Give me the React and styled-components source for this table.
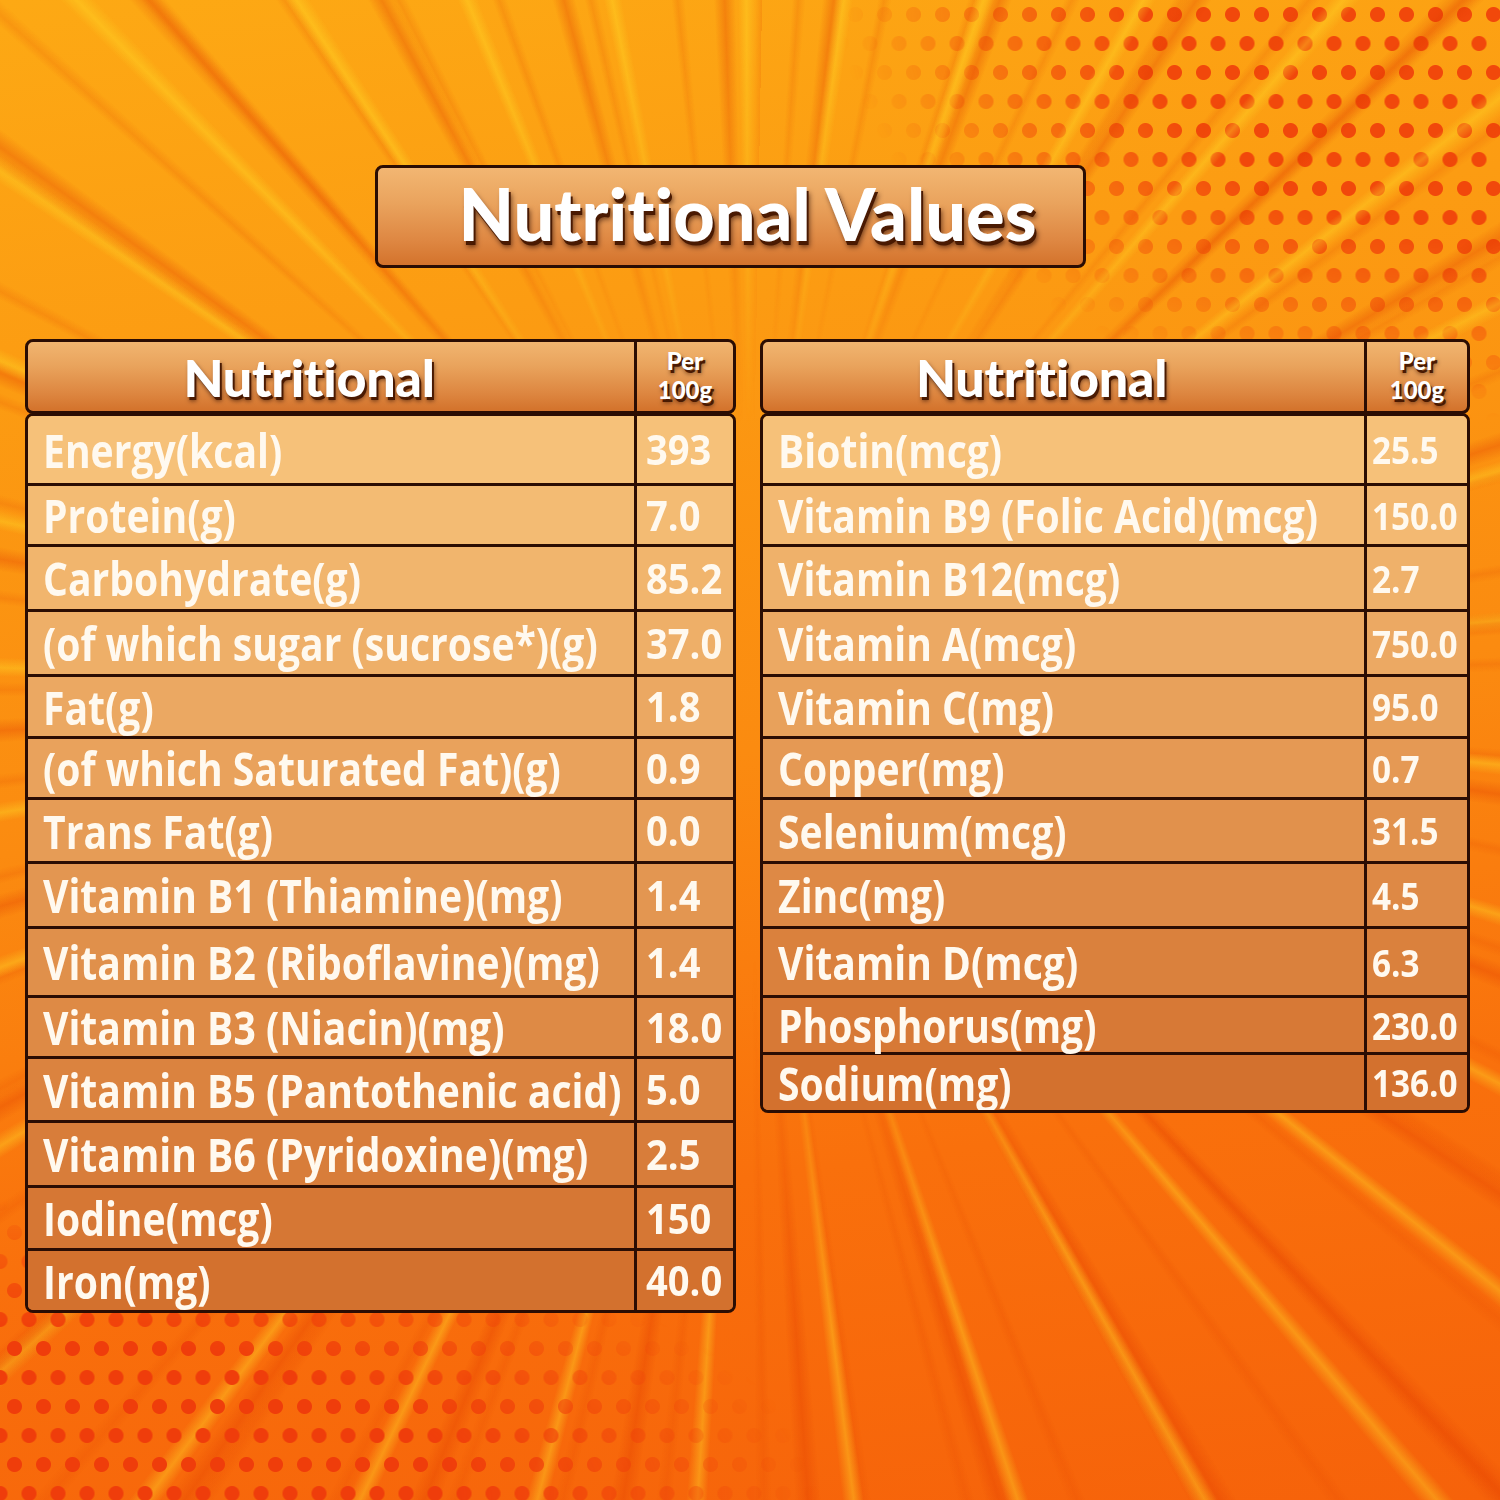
import styled, { createGlobalStyle } from 'styled-components';

const GlobalStyle = createGlobalStyle`
    html, body {
        margin: 0;
        padding: 0;
    }
    body {
        font-family: "Open Sans", "Liberation Sans", sans-serif;
    }
`;

const INK = '#2b0d03';

const leftRows = [
    ['Energy(kcal)', '393', 70],
    ['Protein(g)', '7.0', 61],
    ['Carbohydrate(g)', '85.2', 65],
    ['(of which sugar (sucrose*)(g)', '37.0', 65],
    ['Fat(g)', '1.8', 62],
    ['(of which Saturated Fat)(g)', '0.9', 61],
    ['Trans Fat(g)', '0.0', 64],
    ['Vitamin B1 (Thiamine)(mg)', '1.4', 65],
    ['Vitamin B2 (Riboflavine)(mg)', '1.4', 69],
    ['Vitamin B3 (Niacin)(mg)', '18.0', 61],
    ['Vitamin B5 (Pantothenic acid)', '5.0', 64],
    ['Vitamin B6 (Pyridoxine)(mg)', '2.5', 65],
    ['Iodine(mcg)', '150', 63],
    ['Iron(mg)', '40.0', 59],
];

const rightRows = [
    ['Biotin(mcg)', '25.5', 70],
    ['Vitamin B9 (Folic Acid)(mcg)', '150.0', 61],
    ['Vitamin B12(mcg)', '2.7', 65],
    ['Vitamin A(mcg)', '750.0', 65],
    ['Vitamin C(mg)', '95.0', 62],
    ['Copper(mg)', '0.7', 61],
    ['Selenium(mcg)', '31.5', 64],
    ['Zinc(mg)', '4.5', 65],
    ['Vitamin D(mcg)', '6.3', 69],
    ['Phosphorus(mg)', '230.0', 57],
    ['Sodium(mg)', '136.0', 55],
];

// row colour goes from light tan at the top to burnt orange at the bottom
const mix = (t) => {
    const a = [246, 193, 121];
    const b = [211, 113, 46];
    const c = a.map((v, i) => Math.round(v + (b[i] - v) * t));
    return `rgb(${c[0]}, ${c[1]}, ${c[2]})`;
};

const dots = (color, r) => `
    radial-gradient(circle at 14.5px 14.5px, ${color} ${r}px, transparent ${r + 1}px) 0 0 / 29px 58px,
    radial-gradient(circle at 14.5px 14.5px, ${color} ${r}px, transparent ${r + 1}px) 14.5px 29px / 29px 58px
`;

const Page = styled.div`
    position: relative;
    width: 1500px;
    height: 1500px;
    overflow: hidden;
    box-sizing: border-box;
    padding: 165px 30px 0 25px;
    background: linear-gradient(172deg, #fda914 0%, #fc9c12 22%, #fb8b10 50%, #f9700c 75%, #f6620a 100%);

    &::before,
    &::after {
        content: '';
        position: absolute;
        inset: 0;
        pointer-events: none;
    }
    &::before {
        background: ${dots('#f1480b', 7)};
        -webkit-mask-image: radial-gradient(ellipse 660px 420px at 100% 0%, #000 55%, transparent 100%);
        mask-image: radial-gradient(ellipse 660px 420px at 100% 0%, #000 55%, transparent 100%);
    }
    &::after {
        background: ${dots('#ef3d0b', 7)};
        -webkit-mask-image: radial-gradient(ellipse 820px 300px at 0% 100%, #000 55%, transparent 100%);
        mask-image: radial-gradient(ellipse 820px 300px at 0% 100%, #000 55%, transparent 100%);
    }
`;

// speed lines radiating from the middle of the picture, faded toward the centre
const Rays = styled.div`
    position: absolute;
    inset: 0;
    pointer-events: none;
    background:
        repeating-conic-gradient(from 3deg at 50% 46%,
            rgba(255, 220, 40, 0) 0deg 4deg,
            rgba(255, 220, 40, 0.4) 4.7deg,
            rgba(255, 220, 40, 0) 5.5deg 11deg),
        repeating-conic-gradient(from 0deg at 50% 46%,
            rgba(226, 58, 0, 0) 0deg 6deg,
            rgba(226, 58, 0, 0.32) 6.9deg,
            rgba(226, 58, 0, 0) 7.8deg 13deg),
        repeating-conic-gradient(from 1deg at 50% 46%,
            rgba(230, 70, 0, 0) 0deg 2.5deg,
            rgba(230, 70, 0, 0.18) 3deg,
            rgba(230, 70, 0, 0) 3.6deg 7deg);
    -webkit-mask-image: radial-gradient(ellipse 760px 760px at 50% 46%, transparent 35%, #000 85%);
    mask-image: radial-gradient(ellipse 760px 760px at 50% 46%, transparent 35%, #000 85%);
`;

const Content = styled.div`
    position: relative;
    z-index: 1;
`;

const TitleBox = styled.div`
    box-sizing: border-box;
    width: 711px;
    height: 103px;
    margin-left: 350px;
    display: flex;
    align-items: center;
    justify-content: center;
    padding: 0 0 8px 34px;
    border: 3px solid ${INK};
    border-radius: 8px;
    background: linear-gradient(180deg, #f2b672 0%, #eaa45e 35%, #de8742 75%, #d4732c 100%);
`;

const Title = styled.h1`
    margin: 0;
    font-family: Lato, "Liberation Sans", sans-serif;
    font-weight: 900;
    font-size: 72px;
    letter-spacing: 0;
    line-height: 1;
    font-variant-ligatures: none;
    color: #ffffff;
    text-shadow: 2px 4px 0 #4a1a02, 3px 6px 5px rgba(40, 10, 0, 0.6);
`;

const Tables = styled.div`
    display: flex;
    gap: 24px;
    margin-top: 71px;
    align-items: flex-start;
`;

const Table = styled.div`
    width: ${(p) => p.$w}px;
    display: flex;
    flex-direction: column;
`;

const Header = styled.div`
    box-sizing: border-box;
    height: 75px;
    display: grid;
    grid-template-columns: minmax(0, 1fr) ${(p) => p.$valW}px;
    border: 3px solid ${INK};
    border-radius: 8px;
    background: linear-gradient(180deg, #f1b570 0%, #e9a35c 35%, #dd8640 75%, #d3722b 100%);
    font-family: Lato, "Liberation Sans", sans-serif;
    font-weight: 900;
    font-variant-ligatures: none;
    color: #ffffff;
    text-shadow: 2px 3px 0 #4a1a02, 2px 4px 4px rgba(40, 10, 0, 0.6);
`;

const HeadName = styled.div`
    display: flex;
    align-items: center;
    justify-content: center;
    padding-right: 44px;
    font-size: 52px;
    letter-spacing: -0.3px;
    line-height: 1;
`;

const HeadPer = styled.div`
    box-sizing: border-box;
    border-left: 3px solid ${INK};
    display: flex;
    align-items: center;
    justify-content: center;
    text-align: center;
    font-size: 24px;
    line-height: 29px;
    padding-bottom: 3px;
`;

const Body = styled.div`
    border: 3px solid ${INK};
    border-radius: 8px;
    overflow: hidden;
    margin-top: -1px;
`;

const Row = styled.div`
    box-sizing: border-box;
    height: ${(p) => p.$h}px;
    display: grid;
    grid-template-columns: minmax(0, 1fr) ${(p) => p.$valW}px;
    background: ${(p) => mix(p.$t)};
    border-bottom: 3px solid ${INK};
    color: #fff9ef;
    font-weight: 700;

    &:last-child {
        border-bottom: none;
    }
`;

const Label = styled.div`
    display: flex;
    align-items: center;
    padding-left: 15px;
    white-space: nowrap;
    font-size: 46px;
    line-height: 1;

    span {
        display: inline-block;
        transform: scaleX(0.85);
        transform-origin: left center;
    }
`;

const Value = styled.div`
    box-sizing: border-box;
    border-left: 3px solid ${INK};
    display: flex;
    align-items: center;
    padding-left: ${(p) => p.$pad}px;
    white-space: nowrap;
    font-size: ${(p) => p.$size}px;
    line-height: 1;

    span {
        display: inline-block;
        transform: scaleX(${(p) => p.$sx});
        transform-origin: left center;
    }
`;

function NutritionTable({ rows, width, valW, valPad, valSize, valSx }) {
    return (
        <Table $w={width}>
            <Header $valW={valW}>
                <HeadName>Nutritional</HeadName>
                <HeadPer>
                    Per
                    <br />
                    100g
                </HeadPer>
            </Header>
            <Body>
                {rows.map(([name, value, h], i) => (
                    <Row key={name} $h={h} $valW={valW} $t={i / (rows.length - 1)}>
                        <Label>
                            <span>{name}</span>
                        </Label>
                        <Value $pad={valPad} $size={valSize} $sx={valSx}>
                            <span>{value}</span>
                        </Value>
                    </Row>
                ))}
            </Body>
        </Table>
    );
}

export default function App() {
    return (
        <>
            <GlobalStyle />
            <Page>
                <Rays />
                <Content>
                    <TitleBox>
                        <Title>Nutritional Values</Title>
                    </TitleBox>
                    <Tables>
                        <NutritionTable
                            rows={leftRows}
                            width={711}
                            valW={99}
                            valPad={9}
                            valSize={41}
                            valSx={0.93}
                        />
                        <NutritionTable
                            rows={rightRows}
                            width={710}
                            valW={103}
                            valPad={5}
                            valSize={37}
                            valSx={0.9}
                        />
                    </Tables>
                </Content>
            </Page>
        </>
    );
}
